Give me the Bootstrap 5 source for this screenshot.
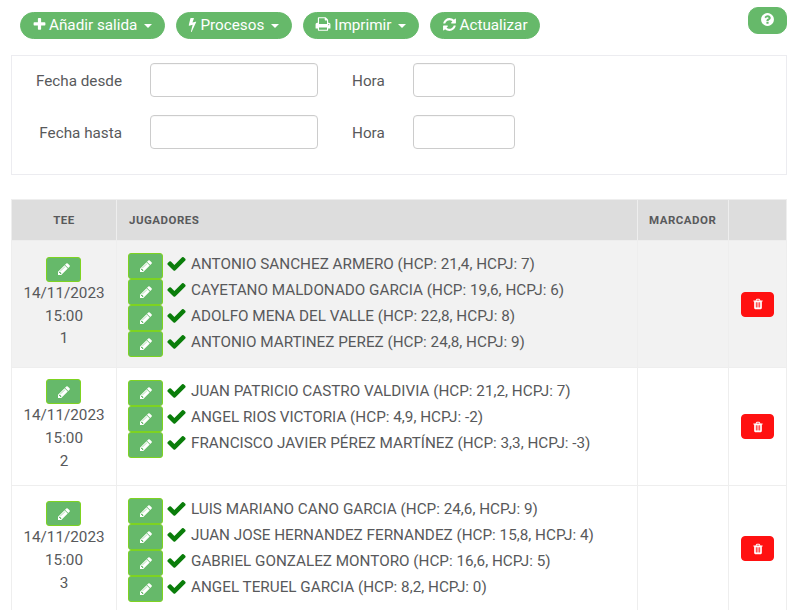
<!DOCTYPE html>
<html lang="es">
<head>
<meta charset="utf-8">
<title>Salidas</title>
<link href="https://cdn.jsdelivr.net/npm/bootstrap@5.3.0/dist/css/bootstrap.min.css" rel="stylesheet">
<style>
html,body{height:610px;overflow:hidden}
body{font-family:Roboto,"Liberation Sans",sans-serif;font-size:15.25px;color:#58595b;background:#fff;padding:0 13px 0 11px}
.ico{fill:currentColor;display:inline-block;vertical-align:-2px}
.toolbar{padding:7px 0 0 9px;height:55px}
.tools{gap:11px}
.gbtn{--bs-btn-bg:#66b96a;--bs-btn-border-color:#66b96a;--bs-btn-color:#fff;--bs-btn-hover-bg:#5aa95e;--bs-btn-hover-color:#fff;--bs-btn-hover-border-color:#5aa95e;--bs-btn-font-size:15.25px;--bs-btn-line-height:19px;--bs-btn-padding-x:11px;--bs-btn-padding-y:3px;--bs-btn-border-radius:14px;--bs-btn-font-weight:400;height:27px;margin-top:5px;white-space:nowrap}
.helpbtn{margin-top:0;width:39px;--bs-btn-border-radius:10px;--bs-btn-padding-x:0}
.gbtn.dropdown-toggle::after{margin-left:7px;margin-right:1px;vertical-align:2px;border-top-width:4px;border-right-width:4px;border-left-width:4px}
.tic{margin-right:2px}
.tic-print{margin-right:3px}
.tic-bolt{margin-left:-3px}
.filters{border:1px solid #ececf0;height:120px;padding:7px 0 0;margin-bottom:24px}
.frow{height:34px;margin-bottom:18px}
.frow .lbl{width:110px;text-align:right;margin:0;padding-top:2px}
.frow .hr{width:61px;margin:0;padding-top:2px}
.frow .dt{width:168px;margin-left:28px;margin-right:34px}
.frow .tm{width:102px}
.frow input{height:33.5px;min-height:0;border:1px solid #ccc;border-radius:4px;padding:0 8px;font-size:15px;box-shadow:inset 0 1px 1px rgba(0,0,0,.03)}
.salidas{table-layout:fixed;width:776px;margin:0;--bs-table-border-color:#eee;--bs-table-color:#58595b;color:#58595b}
.salidas th{background:#ddd;font-size:11.5px;letter-spacing:.5px;font-weight:700;height:41px;vertical-align:middle;padding:1px 11px 0;border-color:#eee;text-transform:uppercase}
.salidas th.w-jug{padding-left:12px}
.salidas td{padding:0;border-color:#eee;vertical-align:middle}
.w-tee{width:105px}.w-mar{width:91px}.w-del{width:58px}
.r1 td{background:#f2f2f2}
.r1{height:127px}.r2{height:118px}.r3{height:126px}
.salidas td.teecell{text-align:center;line-height:22.67px;padding-bottom:1px}
.pbtn{--bs-btn-bg:#66b96a;--bs-btn-border-color:#7ed321;--bs-btn-color:#fff;--bs-btn-hover-bg:#66b96a;--bs-btn-hover-color:#fff;--bs-btn-hover-border-color:#7ed321;--bs-btn-padding-x:0;--bs-btn-padding-y:0;--bs-btn-border-radius:3px;width:35px;height:26px;display:flex;align-items:center;justify-content:center;flex:none}
.pbtn.teeb{margin:0 0 0 34px;height:25px}
.salidas td.players{padding:12px 12px 0 11px;vertical-align:top}
.pl{height:26px;line-height:22px;white-space:nowrap}
.chk{color:#0a7d0a;margin:0 4px 0 3px;flex:none}
.dbtn{--bs-btn-bg:#f11;--bs-btn-border-color:#f11;--bs-btn-color:#fff;--bs-btn-hover-bg:#f11;--bs-btn-hover-color:#fff;--bs-btn-hover-border-color:#f11;--bs-btn-padding-x:0;--bs-btn-padding-y:0;--bs-btn-border-radius:4px;width:33px;height:25px;display:flex;align-items:center;justify-content:center;margin:0 0 0 12px}
</style>
</head>
<body>
<svg width="0" height="0" class="position-absolute">
<defs>
<symbol id="i-plus" viewBox="0 0 1792 1792"><path d="M1600 736v192q0 40-28 68t-68 28h-416v416q0 40-28 68t-68 28h-192q-40 0-68-28t-28-68v-416h-416q-40 0-68-28t-28-68v-192q0-40 28-68t68-28h416v-416q0-40 28-68t68-28h192q40 0 68 28t28 68v416h416q40 0 68 28t28 68z"/></symbol>
<symbol id="i-bolt" viewBox="0 0 1792 1792"><path d="M1333 566q18 20 7 44l-540 1157q-13 25-42 25-4 0-14-2-17-5-25.5-19t-4.5-30l197-808-406 101q-4 1-12 1-18 0-31-11-18-15-13-39l201-825q4-14 16-23t28-9h328q19 0 32 12.5t13 29.5q0 8-5 18l-171 463 396-98q8-2 12-2 19 0 34 15z"/></symbol>
<symbol id="i-print" viewBox="0 0 1792 1792"><path d="M448 1536h896v-256h-896v256zm0-640h896v-384h-160q-40 0-68-28t-28-68v-160h-640v640zm1152 64q0-26-19-45t-45-19-45 19-19 45 19 45 45 19 45-19 19-45zm128 0v416q0 13-9.5 22.5t-22.5 9.5h-224v160q0 40-28 68t-68 28h-960q-40 0-68-28t-28-68v-160h-224q-13 0-22.5-9.5t-9.5-22.5v-416q0-79 56.5-135.5t135.5-56.5h64v-544q0-40 28-68t68-28h672q40 0 88 20t76 48l152 152q28 28 48 76t20 88v256h64q79 0 135.5 56.5t56.5 135.5z"/></symbol>
<symbol id="i-refresh" viewBox="0 0 1792 1792"><path d="M1639 1056q0 5-1 7-64 268-268 434.5t-478 166.5q-146 0-282.5-55t-243.5-157l-129 129q-19 19-45 19t-45-19-19-45v-448q0-26 19-45t45-19h448q26 0 45 19t19 45-19 45l-137 137q71 66 161 102t187 36q134 0 250-65t186-179q11-17 53-117 8-23 30-23h192q13 0 22.5 9.5t9.5 22.5zm25-800v448q0 26-19 45t-45 19h-448q-26 0-45-19t-19-45 19-45l138-138q-148-137-349-137-134 0-250 65t-186 179q-11 17-53 117-8 23-30 23h-199q-13 0-22.5-9.5t-9.5-22.5v-7q65-268 270-434.5t480-166.5q146 0 284 55.5t245 156.5l130-129q19-19 45-19t45 19 19 45z"/></symbol>
<symbol id="i-help" viewBox="0 0 1792 1792"><path d="M1024 1376v-192q0-14-9-23t-23-9h-192q-14 0-23 9t-9 23v192q0 14 9 23t23 9h192q14 0 23-9t9-23zm256-672q0-88-55.5-163t-138.5-116-170-41q-243 0-371 213-15 24 8 42l132 100q7 6 19 6 16 0 25-12 53-68 86-92 34-24 86-24 48 0 85.5 26t37.5 59q0 38-20 61t-68 45q-63 28-115.5 86.5t-52.5 125.5v36q0 14 9 23t23 9h192q14 0 23-9t9-23q0-19 21.5-49.5t54.5-49.5q32-18 49-28.5t46-35 44.5-48 28-60.5 12.5-81zm384 192q0 209-103 385.5t-279.5 279.5-385.5 103-385.5-103-279.5-279.5-103-385.5 103-385.5 279.5-279.5 385.5-103 385.5 103 279.5 279.5 103 385.5z"/></symbol>
<symbol id="i-pencil" viewBox="0 0 1792 1792"><path d="M491 1536l91-91-235-235-91 91v107h128v128h107zm523-928q0-22-22-22-10 0-17 7l-542 542q-7 7-7 17 0 22 22 22 10 0 17-7l542-542q7-7 7-17zm-54-192l416 416-832 832h-416v-416zm683 96q0 53-37 90l-166 166-416-416 166-165q36-38 90-38 53 0 91 38l235 234q37 39 37 91z"/></symbol>
<symbol id="i-check" viewBox="0 0 1792 1792"><path d="M1671 566q0 40-28 68l-724 724-136 136q-28 28-68 28t-68-28l-136-136-362-362q-28-28-28-68t28-68l136-136q28-28 68-28t68 28l294 295 656-657q28-28 68-28t68 28l136 136q28 28 28 68z"/></symbol>
<symbol id="i-trash" viewBox="0 0 1792 1792"><path d="M704 1376v-704q0-14-9-23t-23-9h-64q-14 0-23 9t-9 23v704q0 14 9 23t23 9h64q14 0 23-9t9-23zm256 0v-704q0-14-9-23t-23-9h-64q-14 0-23 9t-9 23v704q0 14 9 23t23 9h64q14 0 23-9t9-23zm256 0v-704q0-14-9-23t-23-9h-64q-14 0-23 9t-9 23v704q0 14 9 23t23 9h64q14 0 23-9t9-23zm-544-992h448l-48-117q-7-9-17-11h-317q-10 2-17 11zm928 32v64q0 14-9 23t-23 9h-96v948q0 83-47 143.5t-113 60.5h-832q-66 0-113-58.5t-47-141.5v-952h-96q-14 0-23-9t-9-23v-64q0-14 9-23t23-9h309l70-167q15-37 54-63t79-26h320q40 0 79 26t54 63l70 167h309q14 0 23 9t9 23z"/></symbol>
</defs>
</svg>

<div class="toolbar d-flex align-items-start">
  <div class="d-flex flex-grow-1 tools">
    <button class="btn gbtn dropdown-toggle" type="button"><svg class="ico tic" width="15" height="15"><use href="#i-plus"/></svg>Añadir salida</button>
    <button class="btn gbtn dropdown-toggle" type="button"><svg class="ico tic-bolt" width="15" height="15"><use href="#i-bolt"/></svg>Procesos</button>
    <button class="btn gbtn dropdown-toggle" type="button"><svg class="ico tic-print" width="16" height="16"><use href="#i-print"/></svg>Imprimir</button>
    <button class="btn gbtn" type="button"><svg class="ico tic" width="15" height="15"><use href="#i-refresh"/></svg>Actualizar</button>
  </div>
  <button class="btn gbtn helpbtn" type="button" aria-label="Ayuda"><svg class="ico" width="15" height="15"><use href="#i-help"/></svg></button>
</div>

<div class="filters">
  <div class="frow d-flex align-items-start"><label class="lbl align-self-center">Fecha desde</label><input class="dt form-control" type="text"><label class="hr align-self-center">Hora</label><input class="tm form-control" type="text"></div>
  <div class="frow d-flex align-items-start"><label class="lbl align-self-center">Fecha hasta</label><input class="dt form-control" type="text"><label class="hr align-self-center">Hora</label><input class="tm form-control" type="text"></div>
</div>

<table class="table table-bordered salidas">
  <thead><tr><th class="w-tee text-center">Tee</th><th class="w-jug">Jugadores</th><th class="w-mar">Marcador</th><th class="w-del"></th></tr></thead>
  <tbody>
    <tr class="r1">
      <td class="teecell"><a class="btn pbtn teeb"><svg width="14" height="14" class="ico"><use href="#i-pencil"/></svg></a>14/11/2023<br>15:00<br>1</td>
      <td class="players">
        <div class="pl d-flex"><a class="btn pbtn"><svg width="14" height="14" class="ico"><use href="#i-pencil"/></svg></a><svg width="21" height="21" class="ico chk"><use href="#i-check"/></svg><span>ANTONIO SANCHEZ ARMERO (HCP: 21,4, HCPJ: 7)</span></div>
        <div class="pl d-flex"><a class="btn pbtn"><svg width="14" height="14" class="ico"><use href="#i-pencil"/></svg></a><svg width="21" height="21" class="ico chk"><use href="#i-check"/></svg><span>CAYETANO MALDONADO GARCIA (HCP: 19,6, HCPJ: 6)</span></div>
        <div class="pl d-flex"><a class="btn pbtn"><svg width="14" height="14" class="ico"><use href="#i-pencil"/></svg></a><svg width="21" height="21" class="ico chk"><use href="#i-check"/></svg><span>ADOLFO MENA DEL VALLE (HCP: 22,8, HCPJ: 8)</span></div>
        <div class="pl d-flex"><a class="btn pbtn"><svg width="14" height="14" class="ico"><use href="#i-pencil"/></svg></a><svg width="21" height="21" class="ico chk"><use href="#i-check"/></svg><span>ANTONIO MARTINEZ PEREZ (HCP: 24,8, HCPJ: 9)</span></div>
      </td>
      <td></td>
      <td><a class="btn dbtn"><svg width="12" height="12" class="ico"><use href="#i-trash"/></svg></a></td>
    </tr>
    <tr class="r2">
      <td class="teecell"><a class="btn pbtn teeb"><svg width="14" height="14" class="ico"><use href="#i-pencil"/></svg></a>14/11/2023<br>15:00<br>2</td>
      <td class="players">
        <div class="pl d-flex"><a class="btn pbtn"><svg width="14" height="14" class="ico"><use href="#i-pencil"/></svg></a><svg width="21" height="21" class="ico chk"><use href="#i-check"/></svg><span>JUAN PATRICIO CASTRO VALDIVIA (HCP: 21,2, HCPJ: 7)</span></div>
        <div class="pl d-flex"><a class="btn pbtn"><svg width="14" height="14" class="ico"><use href="#i-pencil"/></svg></a><svg width="21" height="21" class="ico chk"><use href="#i-check"/></svg><span>ANGEL RIOS VICTORIA (HCP: 4,9, HCPJ: -2)</span></div>
        <div class="pl d-flex"><a class="btn pbtn"><svg width="14" height="14" class="ico"><use href="#i-pencil"/></svg></a><svg width="21" height="21" class="ico chk"><use href="#i-check"/></svg><span>FRANCISCO JAVIER PÉREZ MARTÍNEZ (HCP: 3,3, HCPJ: -3)</span></div>
      </td>
      <td></td>
      <td><a class="btn dbtn"><svg width="12" height="12" class="ico"><use href="#i-trash"/></svg></a></td>
    </tr>
    <tr class="r3">
      <td class="teecell"><a class="btn pbtn teeb"><svg width="14" height="14" class="ico"><use href="#i-pencil"/></svg></a>14/11/2023<br>15:00<br>3</td>
      <td class="players">
        <div class="pl d-flex"><a class="btn pbtn"><svg width="14" height="14" class="ico"><use href="#i-pencil"/></svg></a><svg width="21" height="21" class="ico chk"><use href="#i-check"/></svg><span>LUIS MARIANO CANO GARCIA (HCP: 24,6, HCPJ: 9)</span></div>
        <div class="pl d-flex"><a class="btn pbtn"><svg width="14" height="14" class="ico"><use href="#i-pencil"/></svg></a><svg width="21" height="21" class="ico chk"><use href="#i-check"/></svg><span>JUAN JOSE HERNANDEZ FERNANDEZ (HCP: 15,8, HCPJ: 4)</span></div>
        <div class="pl d-flex"><a class="btn pbtn"><svg width="14" height="14" class="ico"><use href="#i-pencil"/></svg></a><svg width="21" height="21" class="ico chk"><use href="#i-check"/></svg><span>GABRIEL GONZALEZ MONTORO (HCP: 16,6, HCPJ: 5)</span></div>
        <div class="pl d-flex"><a class="btn pbtn"><svg width="14" height="14" class="ico"><use href="#i-pencil"/></svg></a><svg width="21" height="21" class="ico chk"><use href="#i-check"/></svg><span>ANGEL TERUEL GARCIA (HCP: 8,2, HCPJ: 0)</span></div>
      </td>
      <td></td>
      <td><a class="btn dbtn"><svg width="12" height="12" class="ico"><use href="#i-trash"/></svg></a></td>
    </tr>
  </tbody>
</table>
<script src="https://cdn.jsdelivr.net/npm/bootstrap@5.3.0/dist/js/bootstrap.bundle.min.js"></script>
</body>
</html>
